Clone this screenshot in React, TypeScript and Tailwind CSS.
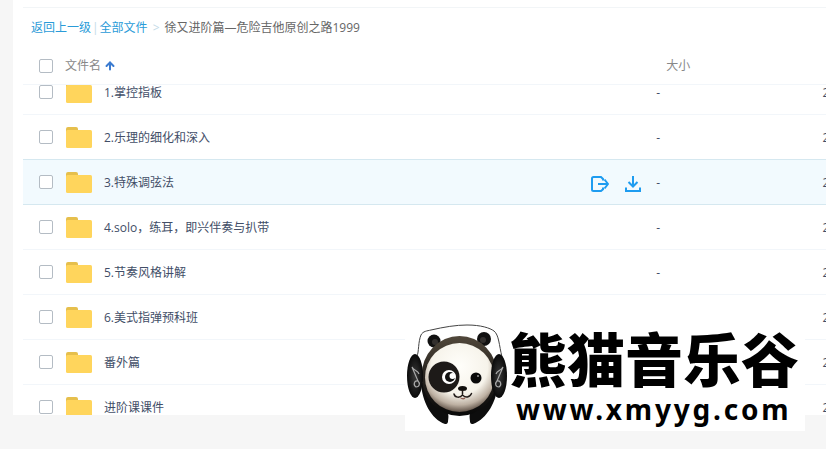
import { ArrowUp } from "lucide-react";

interface FileRow {
    id: number;
    name: string;
    size: string;
    date: string;
    active?: boolean;
}

const files: FileRow[] = [
    { id: 1, name: "1.掌控指板", size: "-", date: "2" },
    { id: 2, name: "2.乐理的细化和深入", size: "-", date: "2" },
    { id: 3, name: "3.特殊调弦法", size: "-", date: "2", active: true },
    { id: 4, name: "4.solo，练耳，即兴伴奏与扒带", size: "-", date: "2" },
    { id: 5, name: "5.节奏风格讲解", size: "-", date: "2" },
    { id: 6, name: "6.美式指弹预科班", size: "", date: "2" },
    { id: 7, name: "番外篇", size: "", date: "2" },
    { id: 8, name: "进阶课课件", size: "", date: "2" },
];

function Checkbox({ label }: { label: string }) {
    return (
        <input
            type="checkbox"
            aria-label={label}
            className="size-3.5 shrink-0 appearance-none rounded-xs border border-[#b4bcc4] bg-white"
        />
    );
}

function FolderIcon() {
    return (
        <svg
            viewBox="0 0 26 21"
            className="ml-[13px] h-[21px] w-[26px] shrink-0">
            <path d="M0 2a2 2 0 0 1 2-2h8a2 2 0 0 1 2 2v5H0z" fill="#e6bf4c" />
            <rect y="3" width="26" height="18" rx="1.5" fill="#ffd55c" />
        </svg>
    );
}

function ShareIcon() {
    return (
        <svg
            viewBox="0 0 18 16"
            className="h-4 w-[18px]"
            fill="none"
            stroke="#1e9cf0"
            strokeWidth="2">
            <path d="M12 4.5V3L10 1H2.5A1.5 1.5 0 0 0 1 2.5v11A1.5 1.5 0 0 0 2.5 15H10l2-1.8v-1.7" />
            <path d="M7 8h10M13.5 3.5 17 8l-3.5 4.5" />
        </svg>
    );
}

function DownloadIcon() {
    return (
        <svg
            viewBox="0 0 16 16"
            className="size-4"
            fill="none"
            stroke="#1e9cf0"
            strokeWidth="2">
            <path d="M8 0v10.5M3.5 6 8 10.5 12.5 6" />
            <path d="M1 11.5V15h14v-3.5" />
        </svg>
    );
}

function PandaLogo() {
    return (
        <svg viewBox="0 0 102 104" className="h-[104px] w-[102px] shrink-0">
            <defs>
                <radialGradient id="face" cx="0.5" cy="0.34" r="0.68">
                    <stop offset="0" stopColor="#fffefa" />
                    <stop offset="0.6" stopColor="#f6f3ea" />
                    <stop offset="0.82" stopColor="#bdb0a2" />
                    <stop offset="1" stopColor="#4e4036" />
                </radialGradient>
                <linearGradient id="fur" x1="0" y1="0" x2="0" y2="1">
                    <stop offset="0" stopColor="#51483b" />
                    <stop offset="0.45" stopColor="#292520" />
                    <stop offset="1" stopColor="#080808" />
                </linearGradient>
                <radialGradient id="cup">
                    <stop offset="0" stopColor="#393939" />
                    <stop offset="1" stopColor="#090909" />
                </radialGradient>
            </defs>
            <path
                d="M10 33c2-4 1-14 4-21 2-4 6-4 10-5C37 4 49 2 60 2c14 0 23 3 27 6 5 4 5 14 8 26"
                fill="none"
                stroke="#444"
                strokeWidth="1"
            />
            <circle cx="27" cy="18" r="6.5" fill="#111" />
            <circle cx="77" cy="16" r="7" fill="#111" />
            <circle cx="28" cy="19" r="3" fill="#33302e" />
            <circle cx="76" cy="17" r="3" fill="#33302e" />
            <path
                d="M14 60c1 18 10 36 24 41 4 1 4-5 3-11h22c-1 6-1 12 3 11 14-5 24-23 25-41z"
                fill="#0d0d0d"
            />
            <path d="M42 93c6 2 14 2 20 0l2 11H40z" fill="#fff" />
            <ellipse cx="52.5" cy="53" rx="38" ry="40" fill="url(#fur)" />
            <circle cx="52.5" cy="54.5" r="34.5" fill="url(#face)" />
            <circle cx="37" cy="54" r="15.5" fill="#1d1a18" />
            <circle cx="42" cy="54" r="7" fill="#fff" />
            <circle cx="43" cy="54" r="5" fill="#111" />
            <circle cx="45.5" cy="53" r="3" fill="#fff" />
            <circle cx="69" cy="55" r="5.5" fill="#090909" />
            <circle cx="71" cy="53" r="1" fill="#999" />
            <ellipse cx="55.5" cy="65.5" rx="4.5" ry="2.5" fill="#100e0c" />
            <path
                d="M55.5 68v3M47 71c1 4 6 4 8.5 1 3 3 7 3 9-1.5"
                fill="none"
                stroke="#211b18"
                strokeWidth="1.5"
                strokeLinecap="round"
            />
            <path d="M52 74q4 2 7 0-2 5-7 0" fill="#8f6257" />
            <ellipse cx="8" cy="53" rx="8" ry="22" fill="url(#cup)" />
            <ellipse cx="92" cy="53" rx="8" ry="22" fill="url(#cup)" />
            <path
                d="m5 44 6 14c-4-1-5 4-2 6 4 0 4-4 2-6M5 44c2 4 6 3 7 7"
                fill="none"
                stroke="#aaa"
                strokeWidth="1.2"
            />
            <path
                d="m96 44-6 14c4-1 5 4 2 6-4 0-4-4-2-6M96 44c-2 4-6 3-7 7"
                fill="none"
                stroke="#aaa"
                strokeWidth="1.2"
            />
        </svg>
    );
}

function Watermark() {
    return (
        <div className="absolute right-[21px] bottom-[18px] flex w-[400px] items-end bg-white pt-3.5 pb-1 pl-0.5 text-black">
            <PandaLogo />
            <div className="flex flex-col">
                <div className="font-['Noto_Sans_CJK_SC',sans-serif] text-[58px] leading-[60px] font-black whitespace-nowrap">
                    熊猫音乐谷
                </div>
                <div className="pt-1 pl-[7px] font-['Noto_Sans',sans-serif] text-[28px] leading-9 font-bold tracking-widest whitespace-nowrap">
                    www.xmyyg.com
                </div>
            </div>
        </div>
    );
}

export default function App() {
    return (
        <div className="relative flex h-screen flex-col overflow-hidden bg-[#f6f6f6] pb-[34px] pl-[13px] font-['Open_Sans','Noto_Sans_CJK_SC',sans-serif] text-xs text-[#424e67]">
            <main className="flex min-h-0 flex-1 flex-col bg-white pt-[7px] pl-2.5">
                <nav className="flex h-[41px] shrink-0 items-center border-t border-[#f2f5f7] pl-2 whitespace-nowrap text-[#666]">
                    <a href="#" className="text-[#2a9bd8]">
                        返回上一级
                    </a>
                    <span className="px-px text-[#c4dbe8]">|</span>
                    <a href="#" className="text-[#2a9bd8]">
                        全部文件
                    </a>
                    <span className="px-[5px] text-[#c4dbe8]">&gt;</span>
                    <span>徐又进阶篇—危险吉他原创之路1999</span>
                </nav>
                <div className="flex min-h-0 flex-1 overflow-hidden">
                    <table className="flex w-[131%] shrink-0 flex-col">
                        <thead className="block shrink-0">
                            <tr className="flex h-[37px] items-center border-b border-[#f2f6fa] text-[#888]">
                                <th className="flex w-[60%] items-center pl-4 font-normal">
                                    <Checkbox label="全选" />
                                    <span className="pl-3">文件名</span>
                                    <ArrowUp
                                        className="ml-[3px] size-3 text-[#3b7bd0]"
                                        strokeWidth={4}
                                    />
                                </th>
                                <th className="w-[16%] pl-3 text-left font-normal">
                                    大小
                                </th>
                            </tr>
                        </thead>
                        <tbody className="block min-h-0 flex-1 overflow-hidden">
                            {files.map((file) => (
                                <tr
                                    key={file.id}
                                    className={`flex items-center first:-mt-[15px] ${
                                        file.active
                                            ? "-mt-px h-[46px] border-y border-[#d5e8f0] bg-[#f2fafe]"
                                            : "h-[45px] border-b border-[#f2f6fa]"
                                    }`}>
                                    <td className="flex w-[60%] items-center pl-4">
                                        <Checkbox label={file.name} />
                                        <FolderIcon />
                                        <span className="flex-1 pt-0.5 pl-3">
                                            {file.name}
                                        </span>
                                        {file.active && (
                                            <span className="flex items-center gap-4 pt-1 pr-[13px]">
                                                <button
                                                    aria-label="分享"
                                                    className="cursor-pointer">
                                                    <ShareIcon />
                                                </button>
                                                <button
                                                    aria-label="下载"
                                                    className="cursor-pointer">
                                                    <DownloadIcon />
                                                </button>
                                            </span>
                                        )}
                                    </td>
                                    <td className="w-[16%] pt-0.5 pl-0.5">
                                        {file.size}
                                    </td>
                                    <td className="pt-0.5">{file.date}</td>
                                </tr>
                            ))}
                        </tbody>
                    </table>
                </div>
            </main>
            <Watermark />
        </div>
    );
}
